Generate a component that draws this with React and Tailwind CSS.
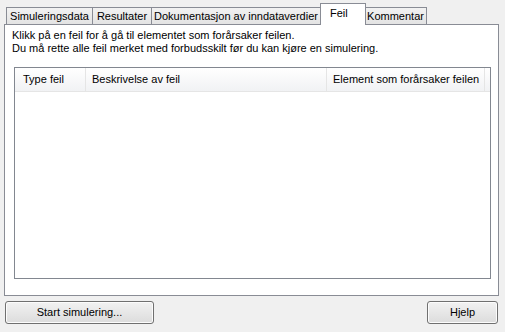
import React from "react";

const tabs = [
  { label: "Simuleringsdata", w: "w-[87px]" },
  { label: "Resultater", w: "w-[60px]" },
  { label: "Dokumentasjon av inndataverdier", w: "w-[170px]" },
  { label: "Feil", w: "w-[46px]", active: true },
  { label: "Kommentar", w: "w-[63px]" },
];

function Tab({ label, w, active }) {
  if (active) {
    return (
      <div
        className={`${w} h-[22px] -mx-[1px] -mb-px z-10 relative bg-white border border-b-0 border-[#898c95] flex justify-start pl-[9px] pt-[3px]`}
      >
        {label}
      </div>
    );
  }
  return (
    <div
      className={`${w} h-[17px] border border-b-0 border-[#898c95] bg-gradient-to-b from-[#f2f2f2] to-[#e3e3e3] flex items-center justify-center -ml-px first:ml-0`}
    >
      {label}
    </div>
  );
}

export default function App() {
  return (
    <div
      className="w-[505px] h-[332px] bg-[#f0f0f0] text-[11px] leading-[13px] text-black overflow-hidden"
      style={{ fontFamily: '"Liberation Sans", Arial, sans-serif' }}
    >
      {/* ===== FANER ===== */}
      <div className="flex items-end h-[24px] pl-[6px]">
        {tabs.map((t) => (
          <Tab key={t.label} {...t} />
        ))}
      </div>

      {/* ===== PANEL ===== */}
      <div className="mx-[4px] w-[495px] h-[272px] border border-[#898c95] bg-white flex flex-col">
        <div className="pl-[7px] pt-[4px]">
          <p>Klikk på en feil for å gå til elementet som forårsaker feilen.</p>
          <p>Du må rette alle feil merket med forbudsskilt før du kan kjøre en simulering.</p>
        </div>

        {/* listevisning */}
        <div className="ml-[9px] mt-[12px] w-[477px] h-[212px] border border-[#828790] bg-white">
          <div className="flex h-[24px] bg-gradient-to-b from-white to-[#f1f2f4] border-b border-[#e5e5e5]">
            <div className="w-[71px] pl-[8px] flex items-center border-r border-[#e5e5e5]">
              Type feil
            </div>
            <div className="w-[241px] pl-[6px] flex items-center border-r border-[#e5e5e5]">
              Beskrivelse av feil
            </div>
            <div className="w-[158px] pl-[6px] flex items-center border-r border-[#e5e5e5]">
              Element som forårsaker feilen
            </div>
          </div>
        </div>
      </div>

      {/* ===== KNAPPER ===== */}
      <div className="flex justify-between pl-[5px] pr-[7px] mt-[5px]">
        <button className="w-[149px] h-[23px] rounded-[3px] border border-[#707070] bg-gradient-to-b from-[#f2f2f2] to-[#dcdcdc] shadow-[inset_0_0_0_1px_#fcfcfc]">
          Start simulering...
        </button>
        <button className="w-[71px] h-[23px] rounded-[3px] border border-[#707070] bg-gradient-to-b from-[#f2f2f2] to-[#dcdcdc] shadow-[inset_0_0_0_1px_#fcfcfc]">
          Hjelp
        </button>
      </div>
    </div>
  );
}
